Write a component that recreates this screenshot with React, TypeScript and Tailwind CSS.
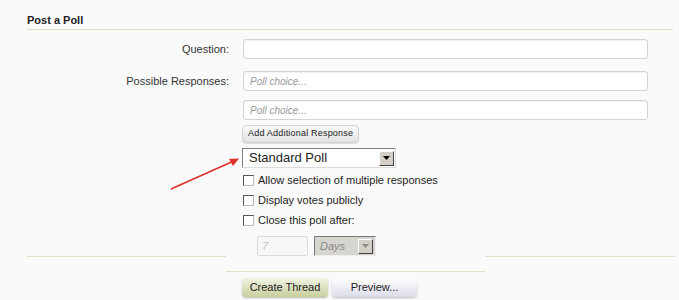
import React from 'react'

const font = { fontFamily: '"Liberation Sans", Arial, sans-serif' }

function TextBox({ placeholder }: { placeholder?: string }) {
  return (
    <div className="h-[20px] w-[405px] rounded-[3px] border border-[#d3d3d3] bg-white shadow-[inset_0_1px_1px_rgba(0,0,0,0.06)] flex items-center px-[6px]">
      {placeholder && <span className="text-[10px] italic text-[#9a9a9a]">{placeholder}</span>}
    </div>
  )
}

function Check({ label }: { label: string }) {
  return (
    <div className="flex h-[20px] items-center gap-[4px] pl-[1px]">
      <span className="h-[11px] w-[11px] border border-t-[#555] border-l-[#555] border-r-[#bbb] border-b-[#bbb] bg-white" />
      <span className="text-[11px] text-[#222]">{label}</span>
    </div>
  )
}

function DropArrow({ disabled }: { disabled?: boolean }) {
  return (
    <span className="flex h-[15px] w-[15px] items-center justify-center border border-t-[#fff] border-l-[#fff] border-r-[#444] border-b-[#444] bg-[#d4d0c8]">
      <svg width="7" height="4" viewBox="0 0 7 4">
        <path d="M0 0h7L3.5 4z" fill={disabled ? '#888' : '#000'} />
      </svg>
    </span>
  )
}

export default function App() {
  return (
    <div className="relative h-[300px] w-[679px] overflow-hidden bg-[#fafafb]" style={font}>
      {/* Header */}
      <div className="ml-[27px] mr-[6px] border-b border-[#dbe4c8] pt-[12px] pb-[2px] leading-[14px]">
        <span className="text-[11px] font-bold text-[#222]">Post a Poll</span>
      </div>

      {/* Question */}
      <div className="mt-[9px] flex items-center">
        <div className="w-[230px] pr-[1px] text-right text-[11px] text-[#333]">Question:</div>
        <div className="ml-[13px]">
          <TextBox />
        </div>
      </div>

      {/* Possible responses */}
      <div className="mt-[12px] flex">
        <div className="w-[230px] pr-[1px] pt-[1px] text-right text-[11px] leading-[18px] text-[#333]">
          Possible Responses:
        </div>
        <div className="ml-[13px] flex flex-col gap-[9px]">
          <TextBox placeholder="Poll choice..." />
          <TextBox placeholder="Poll choice..." />
        </div>
      </div>

      <div className="ml-[242px] mt-[5px] flex">
        <button className="h-[18px] rounded-[4px] border border-[#d2d2d2] bg-gradient-to-b from-[#fafafa] to-[#e2e2e2] px-[5px] text-[9px] tracking-[0.2px] text-[#222] shadow-[0_1px_1px_rgba(0,0,0,0.12)]">
          Add Additional Response
        </button>
      </div>

      {/* Poll options */}
      <div className="mt-[5px] flex">
        <div className="ml-[27px] h-[109px] w-[199px] border-b border-[#dce3c8]" />
        <div className="w-[259px] border-b border-[#dce3c8] pb-[15px] pl-[16px]">
          <div className="flex h-[20px] w-[154px] items-center justify-between border border-t-[#808080] border-l-[#808080] border-r-[#ddd] border-b-[#ddd] bg-white pl-[6px] pr-[1px]">
            <span className="text-[13px] text-[#222]">Standard Poll</span>
            <DropArrow />
          </div>
          <div className="mt-[2px]">
            <Check label="Allow selection of multiple responses" />
            <Check label="Display votes publicly" />
            <Check label="Close this poll after:" />
          </div>
          <div className="mt-[6px] flex gap-[6px] pl-[15px]">
            <div className="flex h-[20px] w-[51px] items-center rounded-[2px] border border-[#dcdcdc] bg-[#f7f7f7] px-[4px]">
              <span className="text-[11px] italic text-[#c4c4c4]">7</span>
            </div>
            <div className="flex h-[20px] w-[62px] items-center justify-between border border-t-[#777] border-l-[#777] border-r-[#eee] border-b-[#eee] bg-[#d6d5d0] pl-[5px] pr-[2px]">
              <span className="text-[11px] italic text-[#888]">Days</span>
              <DropArrow disabled />
            </div>
          </div>
        </div>
        <div className="mr-[3px] h-[109px] flex-1 border-b border-[#dce3c8]" />
      </div>

      {/* Buttons */}
      <div className="ml-[242px] mt-[6px] flex gap-[4px]">
        <button className="h-[19px] w-[86px] rounded-[4px] bg-gradient-to-b from-[#f1f3e2] to-[#c9cf9f] text-[11px] text-[#222] shadow-[0_1px_2px_rgba(0,0,0,0.25)]">
          Create Thread
        </button>
        <button className="h-[19px] w-[85px] rounded-[4px] bg-gradient-to-b from-[#ffffff] to-[#dcdcea] text-[11px] text-[#222] shadow-[0_1px_2px_rgba(0,0,0,0.25)]">
          Preview...
        </button>
      </div>

      {/* Red annotation arrow */}
      <svg className="pointer-events-none absolute left-0 top-0" width="679" height="300">
        <line x1="171" y1="189" x2="236" y2="160" stroke="#e0302a" strokeWidth="1.6" />
        <path d="M239 158.5 L229 159 L233 166 Z" fill="#e0302a" />
      </svg>
    </div>
  )
}
